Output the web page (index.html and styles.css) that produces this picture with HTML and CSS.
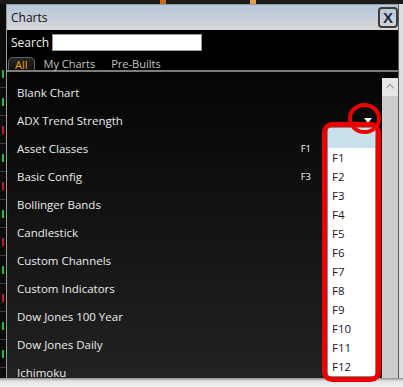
FILE: index.html
```html
<!DOCTYPE html>
<html>
<head>
  <meta charset="utf-8"/>
  <title>Charts</title>
  <link rel="stylesheet" href="styles.css">
</head>
<body>
  <div class="screen">
    <div class="quote-top"></div>

    <div class="desk">
      <!-- quote board peeking out on the left -->
      <div class="quote-side">
        <span class="q up"></span>
        <span class="q up"></span>
        <span class="q down"></span>
        <span class="q up"></span>
        <span class="q down"></span>
        <span class="q up"></span>
        <span class="q down"></span>
        <span class="q up"></span>
        <span class="q down"></span>
        <span class="q up"></span>
        <span class="q up"></span>
      </div>

      <div class="window">
        <div class="titlebar">
          <span class="title">Charts</span>
          <button class="close">X</button>
        </div>

        <div class="search-row">
          <label for="chartSearch">Search</label>
          <input type="text" id="chartSearch" class="search-input"/>
        </div>

        <div class="tabs">
          <span class="tab active">All</span>
          <span class="tab">My Charts</span>
          <span class="tab">Pre-Builts</span>
        </div>

        <div class="list-area">
          <ul class="chart-list">
            <li>Blank Chart</li>
            <li>ADX Trend Strength</li>
            <li>Asset Classes <span class="hotkey">F1</span></li>
            <li>Basic Config <span class="hotkey">F3</span></li>
            <li>Bollinger Bands</li>
            <li>Candlestick</li>
            <li>Custom Channels</li>
            <li>Custom Indicators</li>
            <li>Dow Jones 100 Year</li>
            <li>Dow Jones Daily</li>
            <li>Ichimoku</li>
          </ul>
          <div class="scrollbar">
            <div class="scroll-up"></div>
          </div>

          <!-- hotkey dropdown, opened from the arrow -->
          <span class="drop-arrow"></span>
          <ul class="key-menu">
            <li class="selected"></li>
            <li>F1</li>
            <li>F2</li>
            <li>F3</li>
            <li>F4</li>
            <li>F5</li>
            <li>F6</li>
            <li>F7</li>
            <li>F8</li>
            <li>F9</li>
            <li>F10</li>
            <li>F11</li>
            <li>F12</li>
          </ul>

          <!-- red callouts -->
          <span class="mark-circle"></span>
          <span class="mark-box"></span>
        </div>
      </div>

      <div class="edge"></div>
    </div>

    <div class="bottom"></div>
  </div>
</body>
</html>
```

FILE: styles.css
```css
* {
  box-sizing: border-box;
}
body {
  margin: 0;
  width: 403px;
  height: 387px;
  overflow: hidden;
  background-color: #f0f0f0;
  font-family: "Open Sans", "Liberation Sans", sans-serif;
}
.screen {
  display: flex;
  flex-direction: column;
  height: 387px;
}
.quote-top {
  height: 4px;
  flex-shrink: 0;
  background: linear-gradient(90deg, #1a1a1a 0, #1a1a1a 160px, #d06a10 160px, #d06a10 166px,
    #1a1a1a 166px, #1a1a1a 250px, #e0a040 250px, #e0a040 256px, #1a1a1a 256px);
}
.desk {
  display: flex;
  height: 374px;
  flex-shrink: 0;
}
.quote-side {
  width: 6px;
  display: flex;
  flex-direction: column;
  padding-top: 56px;
  background-color: #0c0c0c;
  overflow: hidden;
}
.q {
  position: relative;
  display: block;
  height: 28px;
  flex-shrink: 0;
  border-bottom: 1px solid #3a3a3a;
}
.q::after {
  content: "";
  position: absolute;
  left: 2px;
  top: 10px;
  width: 2px;
  height: 8px;
}
.q.up::after {
  background-color: #28b828;
}
.q.down::after {
  background-color: #c81c1c;
}
.window {
  width: 393px;
  display: flex;
  flex-direction: column;
  background-color: #000;
  border: 1px solid #9a9a9a;
  border-bottom: none;
  border-right-color: #5a5a5a;
}
.titlebar {
  height: 25px;
  flex-shrink: 0;
  display: flex;
  align-items: center;
  padding-left: 4px;
  background: linear-gradient(#b5c6dc, #d6d6d6);
}
.title {
  font-size: 12px;
  color: #111;
}
.close {
  margin-left: auto;
  width: 20px;
  height: 21px;
  padding: 0;
  border: 2px solid #3c3c3c;
  border-radius: 4px;
  background: transparent;
  font-family: "Liberation Sans", sans-serif;
  font-size: 15px;
  font-weight: bold;
  color: #1c2a40;
  line-height: 16px;
}
.search-row {
  height: 25px;
  flex-shrink: 0;
  display: flex;
  align-items: center;
  padding-left: 4px;
  gap: 3px;
}
.search-row label {
  font-size: 12px;
  color: #f2f2f2;
}
.search-input {
  width: 150px;
  height: 17px;
  margin: 0;
  border: 1px solid #9a9a9a;
  background-color: #fff;
}
.tabs {
  height: 17px;
  flex-shrink: 0;
  display: flex;
  align-items: flex-end;
  gap: 2px;
  padding-left: 1px;
  border-bottom: 2px solid #7c7c7c;
}
.tab {
  height: 13px;
  padding: 0 7px;
  font-size: 11px;
  line-height: 13px;
  color: #c4c4c4;
}
.tab.active {
  color: #f2a20a;
  border: 1px solid #5e5e5e;
  border-bottom: none;
  border-radius: 5px 5px 0 0;
  padding: 0 6px;
  background: linear-gradient(#262626, #111);
}
.list-area {
  position: relative;
  flex: 1;
  min-height: 0;
  display: flex;
  background: linear-gradient(#050505, #222);
}
.chart-list {
  flex: 1;
  margin: 0;
  padding: 6px 71px 0 10px;
  list-style: none;
  overflow: hidden;
}
.chart-list li {
  height: 28px;
  display: flex;
  align-items: center;
  font-size: 11.5px;
  color: #ececec;
  white-space: nowrap;
}
.hotkey {
  margin-left: auto;
  font-size: 9.5px;
  color: #f4f4f4;
}
.scrollbar {
  width: 16px;
  margin-top: 6px;
  background-color: #cdcdcd;
}
.scroll-up {
  position: relative;
  height: 18px;
  background-color: #e6e6e6;
}
.scroll-up::after {
  content: "";
  position: absolute;
  left: 5px;
  top: 7px;
  width: 5px;
  height: 5px;
  border-left: 1px solid #9a9a9a;
  border-top: 1px solid #9a9a9a;
  transform: rotate(45deg);
}
.drop-arrow {
  position: absolute;
  left: 357px;
  top: 46px;
  border-left: 4px solid transparent;
  border-right: 4px solid transparent;
  border-top: 5px solid #fff;
}
.key-menu {
  position: absolute;
  left: 320px;
  top: 55px;
  width: 49px;
  height: 250px;
  margin: 0;
  padding: 0;
  list-style: none;
  background-color: #fff;
  border: 1px solid #8a8a8a;
  overflow: hidden;
}
.key-menu li {
  height: 19px;
  padding-left: 4px;
  font-size: 11.5px;
  line-height: 19px;
  color: #151530;
}
.key-menu li.selected {
  height: 20px;
  background-color: #c9e1ec;
}
.mark-circle {
  position: absolute;
  left: 341px;
  top: 31px;
  width: 33px;
  height: 31px;
  border: 4px solid #f00000;
  border-radius: 50%;
}
.mark-box {
  position: absolute;
  left: 315px;
  top: 50px;
  width: 59px;
  height: 260px;
  border: 5px solid #f00000;
  border-radius: 10px;
}
.edge {
  flex: 1;
  background-color: #dedede;
}
.bottom {
  flex: 1;
  background: linear-gradient(#8c8c8c, #e2e2e2 3px, #f4f4f4);
}
```
